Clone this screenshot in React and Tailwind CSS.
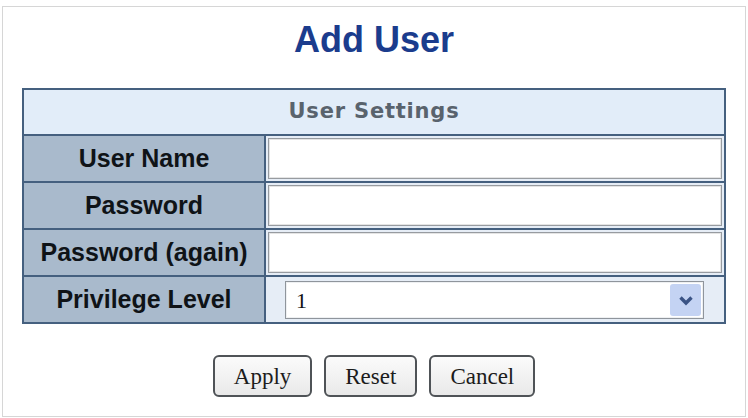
import { useState } from "react";

const sans = { fontFamily: '"Liberation Sans", Arial, sans-serif' };
const serif = { fontFamily: '"Liberation Serif", "Times New Roman", serif' };

const fields = [
  { label: "User Name", key: "name", type: "text" },
  { label: "Password", key: "pass", type: "password" },
  { label: "Password (again)", key: "pass2", type: "password" },
];

function LabelCell({ children }) {
  return (
    <div
      className="flex w-[242px] shrink-0 items-center justify-center border-r-2 border-[#45607f] bg-[#a9bacc] text-[25px] font-bold text-[#0f1317]"
      style={sans}
    >
      {children}
    </div>
  );
}

function Button({ children }) {
  return (
    <button
      type="button"
      className="h-[42px] rounded-[6px] border-2 border-[#4f5357] bg-gradient-to-b from-[#fbfbfb] to-[#e9e9e9] px-[19px] text-[23px] leading-none text-[#1c1c1c]"
      style={serif}
    >
      {children}
    </button>
  );
}

export default function App() {
  const [form, setForm] = useState({ name: "", pass: "", pass2: "", level: "1" });
  const setField = (k, v) => setForm((prev) => ({ ...prev, [k]: v }));

  return (
    <div className="h-[418px] w-[748px] bg-white pl-[2px] pt-[6px]">
      <div className="flex h-[411px] w-[744px] flex-col border border-[#d6d6d6]">
        <h1
          className="mt-[13px] text-center text-[36px] font-bold leading-[40px] text-[#1b3c8d]"
          style={sans}
        >
          Add User
        </h1>

        <div className="mx-auto mt-[28px] w-[704px] border-2 border-[#45607f]">
          <div
            className="flex h-[46px] items-center justify-center border-b-2 border-[#45607f] bg-[#e2edf9] text-[21px] font-bold tracking-[0.8px] text-[#59636d]"
            style={{ fontFamily: '"DejaVu Sans", Verdana, sans-serif' }}
          >
            User Settings
          </div>

          {fields.map((f) => (
            <div key={f.key} className="flex h-[47px] border-b-2 border-[#45607f]">
              <LabelCell>{f.label}</LabelCell>
              <div className="flex flex-1 bg-[#e6edf6] p-[2px]">
                <input
                  type={f.type}
                  value={form[f.key]}
                  onChange={(e) => setField(f.key, e.target.value)}
                  className="h-full w-full border border-[#979ba0] bg-white px-2 text-[20px] shadow-[inset_0_0_0_1px_#e4e4e4] outline-none"
                  style={serif}
                />
              </div>
            </div>
          ))}

          <div className="flex h-[45px]">
            <LabelCell>Privilege Level</LabelCell>
            <div className="flex flex-1 items-start bg-[#e6edf6] pl-[19px] pt-[4px]">
              <div className="relative flex h-[38px] w-[419px] items-center border border-[#8f959c] bg-white pl-[10px] shadow-[inset_0_0_0_1px_#eef0f2]">
                <span className="text-[22px] text-[#111]" style={serif}>
                  {form.level}
                </span>
                <div className="absolute right-[2px] top-[2px] flex h-[32px] w-[31px] items-center justify-center rounded-[3px] bg-[#c4d3f3]">
                  <svg width="16" height="11" viewBox="0 0 16 11">
                    <path d="M2.5 2.5 L8 8 L13.5 2.5" fill="none" stroke="#3a5385" strokeWidth="3.4" />
                  </svg>
                </div>
              </div>
            </div>
          </div>
        </div>

        <div className="mt-[31px] flex justify-center gap-[12px]">
          <Button>Apply</Button>
          <Button>Reset</Button>
          <Button>Cancel</Button>
        </div>
      </div>
    </div>
  );
}
